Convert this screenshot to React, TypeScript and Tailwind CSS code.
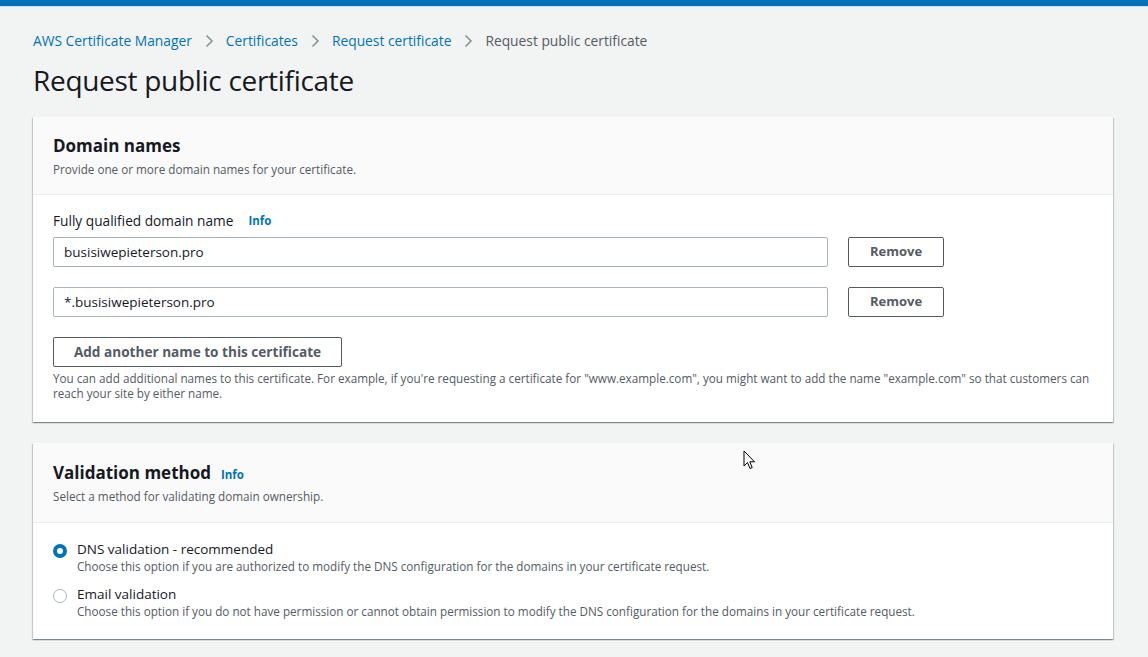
import React from "react";

const font = { fontFamily: '"Open Sans", "Noto Sans", Arial, sans-serif' };

export default function App() {
  return (
    <div className="min-h-[657px] bg-[#f2f3f3] text-[#16191f] relative" style={font}>
      <div className="h-[6px] bg-[#0073bb]" />
      <div className="h-px bg-[#d5dbdb]" />
      <div className="px-[33px] pr-[35px]">
        <nav className="flex items-center text-[13.8px] h-[20px] mt-[24px] text-[#0073bb]">
          <span>AWS Certificate Manager</span>
          <Chevron />
          <span>Certificates</span>
          <Chevron />
          <span>Request certificate</span>
          <Chevron />
          <span className="text-[#545b64]">Request public certificate</span>
        </nav>
        <h1 className="text-[28px] leading-[36px] mt-[11px] tracking-[-0.3px]">Request public certificate</h1>

        <section className="mt-[19px] bg-white shadow-[0_1px_1px_0_rgba(0,28,36,0.3),1px_1px_1px_0_rgba(0,28,36,0.15),-1px_1px_1px_0_rgba(0,28,36,0.15)]">
          <div className="bg-[#fafafa] border-b border-[#eaeded] px-[20px] pt-[18px] pb-[18px] h-[78px]">
            <h2 className="text-[17px] font-bold leading-[22px]">Domain names</h2>
            <p className="text-[11.7px] text-[#545b64] mt-[4px] leading-[16px]">Provide one or more domain names for your certificate.</p>
          </div>
          <div className="px-[20px] pt-[16px] pb-[21px]">
            <div className="flex items-center text-[13.7px] leading-[20px]">
              <span>Fully qualified domain name</span>
              <span className="ml-[15px] text-[11.5px] font-bold text-[#0073bb]">Info</span>
            </div>
            <div className="flex items-center mt-[6px]">
              <div className="w-[775px] h-[30px] border border-[#aab7b8] rounded-[2px] flex items-center px-[10px] text-[13.5px]">busisiwepieterson.pro</div>
              <button className="ml-[20px] w-[96px] h-[30px] border border-[#545b64] rounded-[2px] text-[13px] font-bold text-[#545b64]">Remove</button>
            </div>
            <div className="flex items-center mt-[20px]">
              <div className="w-[775px] h-[30px] border border-[#aab7b8] rounded-[2px] flex items-center px-[10px] text-[13.5px]">*.busisiwepieterson.pro</div>
              <button className="ml-[20px] w-[96px] h-[30px] border border-[#545b64] rounded-[2px] text-[13px] font-bold text-[#545b64]">Remove</button>
            </div>
            <button className="mt-[20px] w-[289px] h-[30px] border border-[#545b64] rounded-[2px] text-[13.6px] font-bold text-[#545b64]">Add another name to this certificate</button>
            <p className="mt-[4px] text-[11.7px] leading-[15px] text-[#545b64]">
              You can add additional names to this certificate. For example, if you're requesting a certificate for "www.example.com", you might want to add the name "example.com" so that customers can reach your site by either name.
            </p>
          </div>
        </section>

        <section className="mt-[21px] bg-white shadow-[0_1px_1px_0_rgba(0,28,36,0.3),1px_1px_1px_0_rgba(0,28,36,0.15),-1px_1px_1px_0_rgba(0,28,36,0.15)]">
          <div className="bg-[#fafafa] border-b border-[#eaeded] px-[20px] pt-[19px] h-[80px]">
            <div className="flex items-baseline">
              <h2 className="text-[17px] font-bold leading-[22px]">Validation method</h2>
              <span className="ml-[10px] text-[11.5px] font-bold text-[#0073bb]">Info</span>
            </div>
            <p className="text-[11.7px] text-[#545b64] mt-[4px] leading-[16px]">Select a method for validating domain ownership.</p>
          </div>
          <div className="px-[20px] pt-[17px] pb-[20px]">
            <div className="flex">
              <div className="mt-[4px] w-[14px] h-[14px] rounded-full border-[4px] border-[#0073bb] bg-white" />
              <div className="ml-[10px]">
                <div className="text-[13.5px] leading-[18px]">DNS validation - recommended</div>
                <div className="text-[11.7px] leading-[16px] text-[#545b64]">Choose this option if you are authorized to modify the DNS configuration for the domains in your certificate request.</div>
              </div>
            </div>
            <div className="flex mt-[11px]">
              <div className="mt-[4px] w-[14px] h-[14px] rounded-full border-[1.5px] border-[#aab7b8] bg-white" />
              <div className="ml-[10px]">
                <div className="text-[13.5px] leading-[18px]">Email validation</div>
                <div className="text-[11.7px] leading-[16px] text-[#545b64]">Choose this option if you do not have permission or cannot obtain permission to modify the DNS configuration for the domains in your certificate request.</div>
              </div>
            </div>
          </div>
        </section>
      </div>
      <svg className="absolute left-[743px] top-[450px]" width="13" height="20" viewBox="0 0 13 20">
        <path d="M1 1 L1 16 L4.5 12.5 L7 18.5 L9.2 17.6 L6.8 11.8 L11.5 11.8 Z" fill="white" stroke="black" strokeWidth="1" strokeLinejoin="miter" />
      </svg>
    </div>
  );
}

function Chevron() {
  return (
    <svg className="mx-[12px]" width="10" height="14" viewBox="0 0 10 14">
      <path d="M2.5 1.5 L8 7 L2.5 12.5" fill="none" stroke="#879596" strokeWidth="1.6" />
    </svg>
  );
}
